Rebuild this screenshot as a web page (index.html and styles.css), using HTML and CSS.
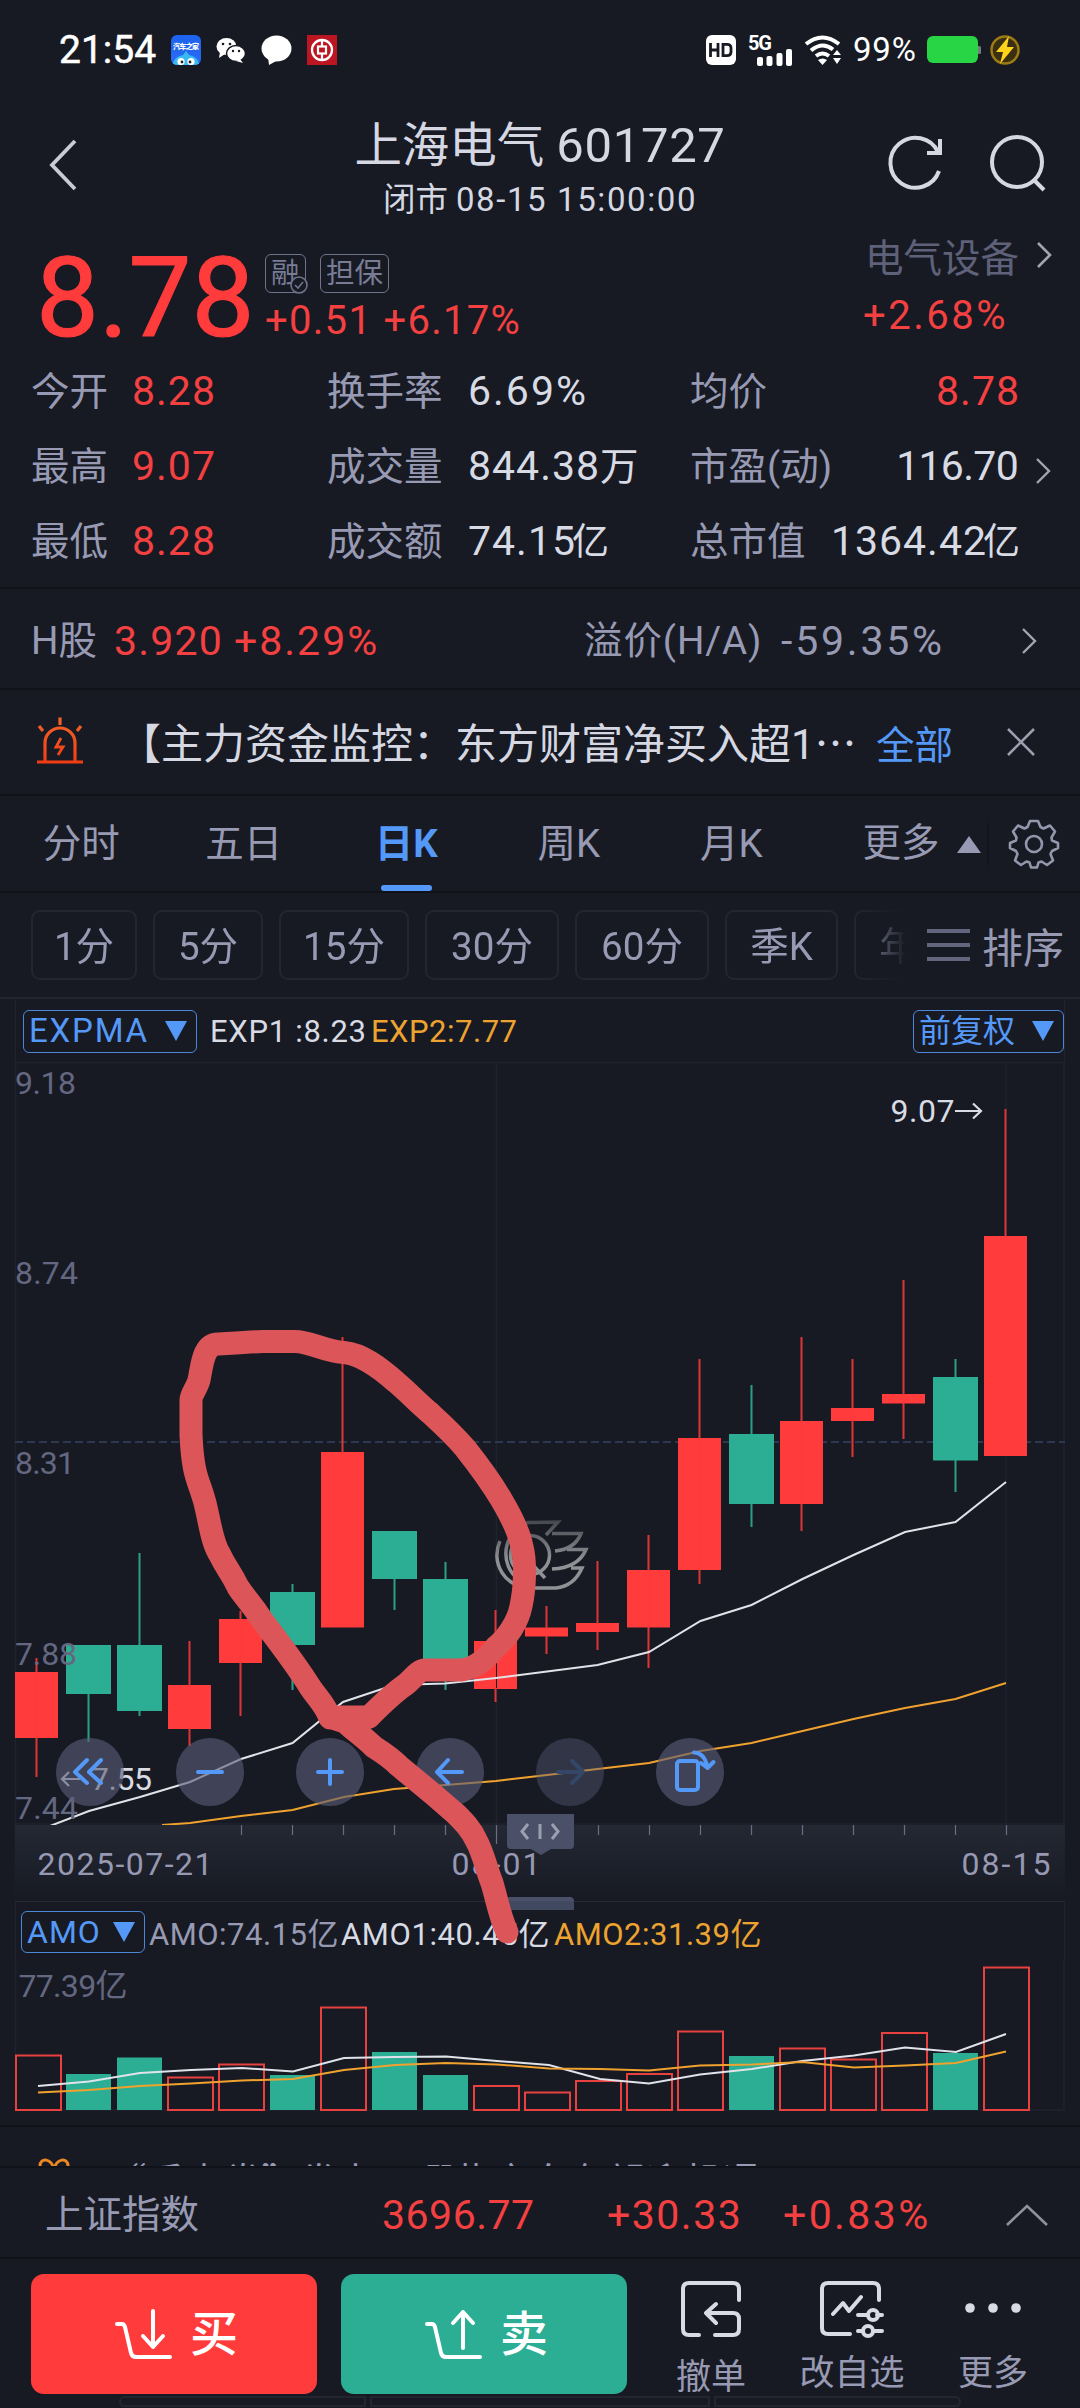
FILE: index.html
```html
<!DOCTYPE html>
<html lang="zh-CN">
<head>
<meta charset="utf-8">
<title>上海电气 601727</title>
<link rel="stylesheet" href="styles.css">
</head>
<body>
<div class="screen">

  <header class="status">
    <div class="status-left">
      <span class="clock">21:54</span>
      <svg width="30" height="30" viewBox="0 0 30 30">
        <defs>
          <linearGradient id="app" x1="0" y1="0" x2="0" y2="1"><stop offset="0" stop-color="#1d63ee"/><stop offset="1" stop-color="#2a6cf5"/></linearGradient>
          <clipPath id="appclip"><rect width="30" height="30" rx="6"/></clipPath>
        </defs>
        <rect width="30" height="30" rx="6" fill="url(#app)"/>
        <text x="2" y="14" font-size="7" font-weight="900" fill="#fff" textLength="26">汽车之家</text>
        <g clip-path="url(#appclip)">
          <path d="M2 30C2 23 8 21 12 20L15 16 18 20C23 21 28 24 28 30Z" fill="#38b9ef"/>
          <circle cx="10" cy="26.500" r="3.600" fill="#fff"/><circle cx="20" cy="26.500" r="3.600" fill="#fff"/>
          <circle cx="11" cy="27" r="1.400" fill="#222"/><circle cx="19" cy="27" r="1.400" fill="#222"/>
        </g>
      </svg>
      <svg width="30" height="30" viewBox="0 0 30 30">
        <ellipse cx="10.500" cy="11.500" rx="10" ry="8.500" fill="#fff"/><path d="M4 17L3 23 9 19Z" fill="#fff"/>
        <ellipse cx="20" cy="18.500" rx="9.500" ry="8" fill="#fff" stroke="#171a23" stroke-width="1.500"/><path d="M24 24L27 28 20 26Z" fill="#fff"/>
        <g fill="#171a23"><circle cx="7" cy="9" r="1.300"/><circle cx="14" cy="9" r="1.300"/><circle cx="17" cy="16" r="1.200"/><circle cx="23" cy="16" r="1.200"/></g>
      </svg>
      <svg width="31" height="30" viewBox="0 0 31 30"><ellipse cx="15.500" cy="13.500" rx="15" ry="13" fill="#fff"/><path d="M7 22L8 30 17 25Z" fill="#fff"/></svg>
      <svg width="30" height="30" viewBox="0 0 30 30">
        <rect width="30" height="30" fill="#bb1622"/>
        <circle cx="15" cy="15" r="10" fill="none" stroke="#fff" stroke-width="2.300"/>
        <rect x="11" y="11.500" width="8" height="7" fill="none" stroke="#fff" stroke-width="2.200"/>
        <path d="M15 5V11M15 19V25" stroke="#fff" stroke-width="2.200"/>
      </svg>
    </div>
    <div class="status-right">
      <svg class="i-hd" width="30" height="30" viewBox="0 0 30 30"><rect width="30" height="30" rx="6" fill="#fff"/><path d="M4.500 8V22M12 8V22M4.500 15H12M17 9.300V20.700H21Q25 20.700 25 17V13Q25 9.300 21 9.300Z" fill="none" stroke="#171a23" stroke-width="2.800"/></svg>
      <svg class="i-net" width="45" height="31" viewBox="0 0 45 31">
        <text x="0" y="14.500" font-size="20" font-weight="700" fill="#fff" textLength="24">5G</text>
        <g fill="#fff"><rect x="9" y="22" width="6" height="9" rx="2"/><rect x="18.500" y="21" width="6" height="10" rx="2"/><rect x="28.500" y="18" width="6" height="13" rx="2"/><rect x="38" y="14" width="6" height="17" rx="2"/></g>
      </svg>
      <svg class="i-wifi" width="38" height="30" viewBox="0 0 38 30">
        <g fill="none" stroke="#fff" stroke-width="4"><path d="M2 9Q18.500 -4 35 9"/><path d="M7 15.500Q18.500 6 29 14.500"/><path d="M12 21Q18.500 16 25 21"/></g>
        <path d="M14 25Q18.500 22 23 25L18.500 30Z" fill="#fff"/>
        <path d="M33 15L37 20H29ZM33 29L37 23H29Z" fill="#fff"/>
      </svg>
      <span class="pct">99%</span>
      <svg class="i-bat" width="54" height="28" viewBox="0 0 54 28"><rect x="50" y="10" width="4" height="8" rx="1.500" fill="#777a80"/><rect width="51" height="27" rx="6" fill="#28d645"/></svg>
      <svg class="i-charge" width="30" height="30" viewBox="0 0 30 30"><circle cx="15" cy="15" r="13.500" fill="#3a2f10" stroke="#9b7b13" stroke-width="2.500"/><path d="M19 1L6 17H13L10 29 24 12H17Z" fill="#ffd21c"/></svg>
    </div>
  </header>

  <nav class="title-bar">
    <svg class="back" width="30" height="54" viewBox="0 0 30 54"><path d="M26 3L3 27 26 51" fill="none" stroke="#c9ccd6" stroke-width="3.800"/></svg>
    <div class="heading">
      <h1>上海电气 <span class="code">601727</span></h1>
      <p>闭市 <span class="time">08-15 15:00:00</span></p>
    </div>
    <div class="tools">
      <svg width="58" height="58" viewBox="0 0 58 58" fill="none" stroke="#d5d8e0" stroke-width="4"><path d="M52 37A25 25 0 1 1 51 18"/><path d="M53 5V19H40"/></svg>
      <svg width="58" height="58" viewBox="0 0 58 58" fill="none" stroke="#d5d8e0" stroke-width="4"><circle cx="28" cy="28" r="25"/><path d="M44 45L55 56"/></svg>
    </div>
  </nav>

  <section class="quote">
    <div class="price">8.78</div>
    <div class="change">
      <div class="badges">
        <span class="badge rong">融<svg width="18" height="18" viewBox="0 0 18 18"><circle cx="9" cy="9" r="8" fill="#171a23" stroke="#70738c" stroke-width="1.600"/><path d="M5 9L8 12 13 6" fill="none" stroke="#70738c" stroke-width="1.600"/></svg></span>
        <span class="badge">担保</span>
      </div>
      <div class="delta">+0.51 +6.17%</div>
    </div>
    <div class="sector">
      <div class="sector-name">电气设备<svg width="16" height="28" viewBox="0 0 16 28"><path d="M2 2L14 14 2 26" fill="none" stroke="#a2a4b0" stroke-width="2.600"/></svg></div>
      <div class="sector-pct">+2.68%</div>
    </div>
  </section>

  <section class="stats">
    <div class="stat-grid">
      <span>今开</span><b class="up">8.28</b><span>换手率</span><b class="wide">6.69%</b><span>均价</span><b class="up end">8.78</b>
      <span>最高</span><b class="up">9.07</b><span>成交量</span><b>844.38<small class="wan">万</small></b><span>市盈(动)</span><b class="end tight">116.70</b>
      <span>最低</span><b class="up">8.28</b><span>成交额</span><b>74.15<small>亿</small></b><span>总市值</span><b class="end">1364.42<small>亿</small></b>
    </div>
    <svg width="16" height="28" viewBox="0 0 16 28"><path d="M2 2L14 14 2 26" fill="none" stroke="#a2a4b0" stroke-width="2.400"/></svg>
  </section>

  <section class="hshare">
    <span class="h-label">H股</span><span class="up h-price">3.920</span><span class="up h-pct">+8.29%</span>
    <span class="prem">溢价(H/A)</span><span class="prem-v">-59.35%</span>
    <svg width="16" height="28" viewBox="0 0 16 28"><path d="M2 2L14 14 2 26" fill="none" stroke="#a2a4b0" stroke-width="2.400"/></svg>
  </section>

  <section class="alert">
    <svg class="siren" width="48" height="48" viewBox="0 0 48 48" fill="none" stroke="url(#fire)" stroke-width="3.200">
      <defs><linearGradient id="fire" gradientUnits="userSpaceOnUse" x1="0" y1="0" x2="0" y2="48"><stop offset="0" stop-color="#f0662b"/><stop offset="1" stop-color="#f23a12"/></linearGradient></defs>
      <path d="M1 45H47M9 44V26A15 15 0 0 1 39 26V44"/><path d="M24 .500V8M3 9L7 14M45 9L41 14"/><path d="M25 21L20 30H27L22 38" stroke-width="2.800"/>
    </svg>
    <span class="alert-text">【主力资金监控：东方财富净买入超1<i>⋯</i></span>
    <span class="all">全部</span>
    <svg width="30" height="30" viewBox="0 0 30 30"><path d="M2 2L28 28M28 2L2 28" stroke="#9d9fae" stroke-width="2.600"/></svg>
  </section>

  <nav class="tabs">
    <span>分时</span><span>五日</span><span class="active">日K</span><span>周K</span><span>月K</span>
    <div class="more">更多<i></i></div>
    <svg width="52" height="52" viewBox="-26 -26 52 52" fill="none" stroke="#9496ab" stroke-width="2.600" stroke-linejoin="round">
      <path d="M-4 -23H4L6.500 -17 9.500 -15.500 16 -18.500 21 -12.500 17.500 -6.500 18 -3.500 24 -1V4L18 7 16.500 10 19 16.500 13 21 7.500 17.500 4.500 18.500 3 23.500H-3L-4.500 18.500 -7.500 17.500 -13 21 -19 16.500 -16.500 10 -18 7 -24 4V-1L-18 -3.500 -17.500 -6.500 -21 -12.500 -16 -18.500 -9.500 -15.500 -6.500 -17Z"/><circle r="8"/>
    </svg>
  </nav>

  <nav class="periods">
    <div class="chips">
      <span class="w1">1分</span><span class="w2">5分</span><span class="w3">15分</span><span class="w4">30分</span><span class="w4">60分</span><span class="w5">季K</span><span class="w5">年K</span>
    </div>
    <svg width="43" height="34" viewBox="0 0 43 34"><path d="M0 3H43M0 17H43M0 31H43" stroke="#62657d" stroke-width="4.200"/></svg>
    <span class="sort">排序</span>
  </nav>

  <section class="chart">
    <div class="legend">
      <span class="pick expma">EXPMA<i></i></span><span class="exp1">EXP1 :8.23</span><span class="gold">EXP2:7.77</span>
      <span class="pick adj">前复权<i></i></span>
    </div>

    <svg class="kline" width="1080" height="839" viewBox="0 1062 1080 839">
      <defs>
        <linearGradient id="axis" x1="0" y1="0" x2="0" y2="1"><stop offset="0" stop-color="#242833"/><stop offset="1" stop-color="#171a23"/></linearGradient>
        <linearGradient id="mark" gradientUnits="userSpaceOnUse" x1="0" y1="1520" x2="0" y2="1560"><stop offset="0" stop-color="#45474e"/><stop offset="1" stop-color="#909194"/></linearGradient>
        <clipPath id="plot"><rect x="15" y="1062" width="1050" height="763"/></clipPath>
      </defs>
      <g fill="none" stroke="#20232e" stroke-width="1.500">
        <path d="M15.500 1062V1901M1064 1062V1824M496.500 1062V1824M1006 1062V1824M15 1062.500H1065M15 1824H1065"/>
      </g>
      <path d="M15 1442H1065" stroke="#2b3850" stroke-width="2" stroke-dasharray="8 4"/>
      <g fill="none" stroke="url(#mark)" stroke-width="3.500">
        <path d="M519 1580A33 33 0 0 1 528 1522.500L558 1522 546 1535M500 1541A33 33 0 0 0 530 1588H556Q574 1586 582 1568H571M552 1533.500H581Q575 1549 555 1551M567 1549.500H586Q578 1568 552 1569"/>
        <circle cx="530" cy="1555" r="19.500"/><path d="M530 1562L545 1578"/>
      </g>
      <g fill="#ff3b3b">
        <path d="M15 1672h43v66h-43zM168 1685h43v44h-43zM219 1619h43v44h-43zM321 1452h43v175.500h-43zM474 1641h43v48h-43zM525 1627.500h43v9h-43zM576 1623h43v9h-43zM627 1570h43v57.500h-43zM678 1438h43v132h-43zM780 1421h43v83h-43zM831 1408h43v13h-43zM882 1394h43v9.500h-43zM984 1236h43v220h-43z"/>
        <path d="M35.500 1658h2v119h-2zM188.500 1641h2v105h-2zM239.500 1611h2v105h-2zM341.500 1337h2v116h-2zM494.500 1610h2v92h-2zM545.500 1606h2v48h-2zM596.500 1561h2v89h-2zM647.500 1535h2v133h-2zM698.500 1359h2v225h-2zM800.500 1337h2v194h-2zM851.500 1359h2v98h-2zM902.500 1280h2v159h-2zM1004.500 1109h2v128h-2z" opacity=".85"/>
      </g>
      <g fill="#2bae94">
        <path d="M66 1645h45v49h-45zM117 1645h45v66h-45zM270 1592h45v53h-45zM372 1531h45v48h-45zM423 1579h45v84h-45zM729 1434h45v70h-45zM933 1377h45v83.500h-45z"/>
        <path d="M87.500 1645h2v97h-2zM138.500 1553h2v163h-2zM291.500 1584h2v106h-2zM393.500 1531h2v79h-2zM444.500 1562h2v128h-2zM750.500 1385h2v142h-2zM954.500 1359h2v133h-2z" opacity=".9"/>
      </g>
      <path d="M496.500 1642V1688" stroke="#171a23" stroke-width="1"/>
      <g clip-path="url(#plot)" fill="none" stroke-width="2">
        <polyline stroke="#e0e3ea" points="50,1826 89,1811 140,1797 190,1782 241,1759 292.500,1743 343,1702 394,1685 445,1683.500 496,1678 547,1671.500 597.500,1665 649,1652 700.500,1621 751.500,1605 802.500,1579 853.500,1555 905,1532 955.500,1522 1006,1482"/>
        <polyline stroke="#f0a12e" points="162,1825 190,1823 241,1816 292.500,1810 344,1797 394,1789 445.500,1785 496,1781 547,1775 597.500,1769 649,1763 700.500,1751 751.500,1743 802.500,1731 853.500,1719 905,1708 955.500,1699 1006,1683"/>
      </g>
      <g font-size="32" fill="#646781">
        <text x="15" y="1094" textLength="61">9.18</text><text x="15" y="1283.500" textLength="63">8.74</text><text x="15" y="1474" textLength="60">8.31</text><text x="15" y="1665" textLength="62">7.88</text><text x="15" y="1819" textLength="63">7.44</text>
      </g>
      <g font-size="32" fill="#d9dce5"><text x="890.500" y="1122" textLength="64">9.07</text><text x="91" y="1790" textLength="61">7.55</text></g>
      <path d="M955 1111H981M973 1103.500L981 1111 973 1118.500M80 1779H62M69 1772L62 1779 69 1786" fill="none" stroke="#d9dce5" stroke-width="2.200"/>

      <rect x="15" y="1825" width="1050" height="76" fill="url(#axis)"/>
      <path d="M241.500 1825v10M292.500 1825v10M343.500 1825v10M394.500 1825v10M445.500 1825v10M496.500 1825v19M547.500 1825v10M598.500 1825v10M649.500 1825v10M700.500 1825v10M751.500 1825v10M802.500 1825v10M853.500 1825v10M904.500 1825v10M955.500 1825v10M1006.500 1825v10" stroke="#6a6d84" stroke-width="1.200"/>
      <g font-size="32" fill="#9799b3"><text x="37.500" y="1875" textLength="175">2025-07-21</text><text x="451.500" y="1875" textLength="89">08-01</text><text x="961.500" y="1875" textLength="89">08-15</text></g>

      <g fill="#5a5e78" fill-opacity=".62">
        <circle cx="90" cy="1772" r="34"/><circle cx="210" cy="1772" r="34"/><circle cx="330" cy="1772" r="34"/><circle cx="450" cy="1772" r="34"/><circle cx="570" cy="1772" r="34" fill-opacity=".4"/><circle cx="690" cy="1772" r="34"/>
      </g>
      <g fill="none" stroke="#5599f8" stroke-width="4" stroke-linecap="round" stroke-linejoin="round">
        <path d="M87 1760L75 1772 87 1783M101 1760L89 1772 101 1783"/>
        <path d="M198 1772H222M318 1772H342M330 1760V1784"/>
        <path d="M462 1772H437M448 1760L437 1772 448 1783"/>
        <path d="M558 1772H583M572 1761L583 1772 572 1783" stroke="#344767"/>
        <rect x="677" y="1761" width="21" height="29" rx="3"/><path d="M694 1752.500Q705 1753 707.500 1768M701 1763L707.500 1768 713.500 1762"/>
      </g>
      <path d="M507 1814H574V1845Q574 1849 570 1849H551L541 1855 531 1849H511Q507 1849 507 1845Z" fill="#4a5067"/>
      <path d="M528 1824L522 1831.500 528 1839M552 1824L558 1831.500 552 1839M540 1824V1839" fill="none" stroke="#9a9fb2" stroke-width="3"/>
      <path d="M507 1901V1899Q507 1897 510 1897H571Q574 1898 574 1901Z" fill="#4a5067"/>
    </svg>

    <div class="legend amo">
      <span class="pick">AMO<i></i></span><span class="a0">AMO:74.15亿</span><span class="a1">AMO1:40.45亿</span><span class="a2">AMO2:31.39亿</span>
    </div>

    <svg class="volume" width="1080" height="166" viewBox="0 1960 1080 166">
      <path d="M15.500 1960V2110H1064V1960" fill="none" stroke="#20232e" stroke-width="1.500"/>
      <text x="18.500" y="1996.500" font-size="32" fill="#646781" textLength="109">77.39亿</text>
      <path fill="#2bae94" d="M66 2074h45v36h-45zM117 2057.500h45v52.500h-45zM270 2075h45v35h-45zM372 2052h45v58h-45zM423 2075h45v35h-45zM729 2056h45v54h-45zM933 2053h45v57h-45z"/>
      <path fill="none" stroke="#e8413f" stroke-width="2" d="M16 2055.500h45v54.500h-45zM168 2077.500h45v32.500h-45zM219 2064.500h45v45.500h-45zM321 2007.500h45v102.500h-45zM474 2086h45v24h-45zM525 2092.500h45v17.500h-45zM576 2081h45v29h-45zM627 2074h45v36h-45zM678 2031.500h45v78.500h-45zM780 2048.500h45v61.500h-45zM831 2059.500h45v50.500h-45zM882 2033h45v77h-45zM984 1967.500h45v142.500h-45z"/>
      <g fill="none" stroke-width="2">
        <polyline stroke="#e0e3ea" points="38,2086 89,2081.500 140,2073 191,2070 242,2068 293,2071.500 344,2058 395,2057 446,2056.500 497,2061 549,2065 600,2079 649,2083.500 700,2074.500 752,2069 802,2061 854,2055.500 905,2047.500 956,2052 1006,2034"/>
        <polyline stroke="#f0a12e" points="38,2092.500 89,2090 140,2086 191,2083.500 242,2080.500 293,2079 344,2070 395,2065 446,2063 497,2064.500 549,2068.500 600,2069 649,2070.500 700,2065.500 752,2064.500 802,2062 854,2067.500 905,2065.500 956,2063 1006,2051.500"/>
      </g>
    </svg>

    <svg class="annotation" width="1080" height="1127" viewBox="0 999 1080 1127">
      <path d="M507 1901H574V1910H507Z" fill="#414961"/>
      <path fill="none" stroke="#dc5659" stroke-width="23" stroke-linecap="round" stroke-linejoin="round" d="M330 1718C325 1704 318 1699 310 1687C298 1667 275 1637 262 1620C250 1601 245 1598 238 1587C231 1572 226 1568 220 1555C212 1543 210 1523 205 1503C199 1480 193 1478 191 1435V1400C191 1394 197 1388 199 1380C202 1366 203 1343 219 1344C235 1343 250 1342 262 1341.500H294C310 1341 326 1352 344 1352.500C362 1354 380 1368 396 1382C408 1392 419 1404 430 1413C442 1424 453 1434 465 1448C480 1467 491 1482 501 1499C510 1514 519 1531 522 1547C526 1562 525 1588 521 1606C518 1622 507 1638 496 1647C488 1656 478 1668 461 1670H425C418 1670 412 1680 405 1685C392 1694 380 1706 369 1717H330L345 1722C357 1733 364 1737 374 1747C382 1752 390 1757 399 1766L434 1795L456 1814C464 1822 471 1829 476 1840C483 1852 487 1871 492 1883C497 1900 500 1917 507 1932"/>
    </svg>
  </section>

  <section class="news">
    <svg width="32" height="32" viewBox="0 0 32 32" fill="none" stroke="#ec8722" stroke-width="3"><path d="M16 12C14 0 2 -1 2 8V12H30V8C30 -1 18 0 16 12M4 12V30H28V12"/></svg>
    <span>“反内卷”发力！哪些方向有望迎机遇？</span>
  </section>

  <section class="index">
    <span class="index-name">上证指数</span><span class="up n1">3696.77</span><span class="up n2">+30.33</span><span class="up n3">+0.83%</span>
    <svg width="44" height="24" viewBox="0 0 44 24"><path d="M2 22L22 3 42 22" fill="none" stroke="#8f919f" stroke-width="2.600"/></svg>
  </section>

  <footer class="actions">
    <button class="buy"><svg width="58" height="52" viewBox="0 0 58 52" fill="none" stroke="#fff" stroke-width="4" stroke-linecap="round" stroke-linejoin="round"><path d="M2 15H7Q9 15 10 18L16 44Q17 48 21 48H55M38 2V38M28 27L38 38 48 27"/></svg>买</button>
    <button class="sell"><svg width="58" height="52" viewBox="0 0 58 52" fill="none" stroke="#fff" stroke-width="4" stroke-linecap="round" stroke-linejoin="round"><path d="M2 15H7Q9 15 10 18L16 44Q17 48 21 48H55M38 39V3M28 14L38 3 48 14"/></svg>卖</button>
    <div class="act cancel"><svg width="60" height="58" viewBox="0 0 60 58" fill="none" stroke="#d8dae4" stroke-width="4" stroke-linecap="round" stroke-linejoin="round"><path d="M58 20V9Q58 3 52 3H8Q2 3 2 9V49Q2 55 8 55H18M34 55H52Q58 55 58 49V39Q58 33 52 33H26M35 24L25 33 35 43"/></svg><span>撤单</span></div>
    <div class="act edit"><svg width="66" height="58" viewBox="0 0 66 58" fill="none" stroke="#d8dae4" stroke-width="4" stroke-linecap="round" stroke-linejoin="round"><path d="M60 20V9Q60 3 54 3H9Q3 3 3 9V48Q3 54 9 54H31M14 34L24 23 30 31 42 17M39 35H49M58 35H63M54 51H63M39 51H44"/><circle cx="54" cy="35" r="5"/><circle cx="49" cy="51" r="5"/></svg><span>改自选</span></div>
    <div class="act"><svg width="60" height="58" viewBox="0 0 60 58" fill="#d8dae4"><circle cx="7" cy="28" r="4.800"/><circle cx="30" cy="28" r="4.800"/><circle cx="53" cy="28" r="4.800"/></svg><span>更多</span></div>
  </footer>
  <div class="nav-hint"><i></i><i></i><i></i></div>
</div>
</body>
</html>
```

FILE: styles.css
```css
* { box-sizing: border-box; margin: 0; padding: 0; }
body {
  width: 1080px;
  height: 2408px;
  overflow: hidden;
  background: #171a23;
  color: #d5d8e2;
  font-family: Roboto, "Noto Sans CJK SC", sans-serif;
}
svg { display: block; flex: none; overflow: visible; }
i { font-style: normal; }
span, b { white-space: nowrap; }
.screen { width: 1080px; height: 2408px; overflow: hidden; }
.up, .delta, .sector-pct { color: #f44040; }

.status { height: 100px; padding: 0 60px 0 59px; display: flex; justify-content: space-between; align-items: center; }
.status-left, .status-right { display: flex; align-items: center; }
.status-left { gap: 15px; }
.clock { width: 97px; font-size: 39px; line-height: 100px; color: #fff; -webkit-text-stroke: .5px #fff; }
.i-net { margin-left: 12px; }
.i-wifi { margin-left: 11px; }
.pct { width: 64px; margin-left: 11px; font-size: 33px; color: #fff; line-height: 104px; letter-spacing: .8px; }
.i-bat { margin-left: 10px; }
.i-charge { margin-left: 9px; }

.title-bar { height: 132px; padding: 0 33px 0 49px; display: flex; }
.back { margin-top: 38px; }
.heading { width: 500px; margin-left: 211px; padding-top: 16px; text-align: center; }
.heading h1 { font-size: 47.5px; font-weight: 400; line-height: 60px; }
.code { font-size: 49px; letter-spacing: .7px; }
.heading p { font-size: 32.5px; line-height: 48px; }
.time { font-size: 33px; letter-spacing: 1.6px; }
.tools { display: flex; gap: 44px; padding-top: 34px; margin-left: auto; }

.quote { height: 121px; padding: 2px 28px 0 36px; display: flex; }
.price { width: 229px; font-size: 112px; line-height: 128px; color: #ff3b3b; -webkit-text-stroke: 1.2px #ff3b3b; }
.change { flex: 1; padding-top: 20px; }
.badges { display: flex; gap: 14px; }
.badge { height: 39px; padding: 0 5px; display: flex; align-items: center; font-size: 28.5px; line-height: 36px; color: #797c95; border: 1.5px solid #70738c; border-radius: 6px; }
.rong { width: 41px; }
.rong svg { margin: 22px 0 0 -10px; }
.delta { font-size: 40px; line-height: 56px; letter-spacing: 1.3px; }
.sector { width: 187px; }
.sector-name { display: flex; align-items: center; justify-content: space-between; font-size: 38.5px; line-height: 50px; color: #5e6179; }
.sector-name svg { margin-bottom: 8px; }
.sector-pct { margin-left: -2px; font-size: 40px; line-height: 60px; padding-top: 2px; letter-spacing: 2.5px; }

.stats { height: 236px; padding: 1px 29px 0 31px; display: flex; align-items: center; justify-content: space-between; border-bottom: 2px solid #10121a; }
.stat-grid { width: 989px; height: 234px; display: grid; grid-template-columns: 101px 195px 141px 222px 120px 210px; grid-auto-rows: 75px; font-size: 38.5px; line-height: 75px; color: #989ab4; }
.stat-grid b { font-size: 41px; font-weight: 400; color: #d8dbe4; letter-spacing: 1px; }
.stat-grid b.up { color: #f44040; }
.stat-grid .end { text-align: right; }
.stat-grid .wide { letter-spacing: 2px; }
.stat-grid .tight { letter-spacing: -.7px; padding-right: 2px; }
.stat-grid small { font-size: 37px; letter-spacing: 0; margin-left: -4px; line-height: 1; }
.stat-grid .wan { font-size: 38.5px; margin-left: 0; }

.hshare { height: 101px; padding: 5px 43px 0 31px; display: flex; align-items: center; font-size: 41px; line-height: 90px; letter-spacing: 1.2px; color: #989ab4; border-bottom: 2px solid #10121a; }
.h-label, .prem { font-size: 38.5px; }
.h-label { width: 83px; letter-spacing: 0; }
.h-price { width: 120px; }
.h-pct { width: 350px; letter-spacing: 2px; }
.prem { width: 197px; letter-spacing: .9px; }
.prem-v { flex: 1; letter-spacing: 2.8px; }

.alert { height: 106px; padding: 0 44px 0 36px; display: flex; align-items: center; border-bottom: 2px solid #10121a; }
.siren { margin-bottom: 2px; }
.alert-text { width: 792px; padding: 6px 0 0 35px; font-size: 42px; line-height: 100px; }
.alert-text i { display: inline-block; width: 36px; }
.all { flex: 1; font-size: 38.5px; color: #5599f8; }

.tabs { height: 97px; display: flex; align-items: center; border-bottom: 2px solid #10121a; color: #989ab4; font-size: 38.5px; }
.tabs > span { width: 162.5px; height: 95px; line-height: 96px; text-align: center; display: flex; flex-direction: column; align-items: center; }
.tabs .active { color: #5599f8; font-weight: 700; }
.tabs .active::after { content: ""; width: 51px; height: 6px; margin-top: -7px; border-radius: 3px; background: #5599f8; }
.more { width: 176px; height: 42px; margin-right: 19px; padding-left: 50px; display: flex; align-items: center; gap: 17px; line-height: 38px; padding-bottom: 2px; border-right: 2px solid #12141c; }
.more i { margin-top: 3px; border: 12px solid transparent; border-top: 0; border-bottom: 17px solid #989ab4; }

.periods { height: 106px; padding: 0 0 1px 31px; display: flex; align-items: center; font-size: 38.5px; color: #989ab4; border-bottom: 2px solid #22252f; }
.chips { width: 875px; overflow: hidden; display: flex; gap: 16px; -webkit-mask-image: linear-gradient(90deg, #000 94%, transparent 100%); mask-image: linear-gradient(90deg, #000 94%, transparent 100%); }
.chips span { flex: none; height: 70px; line-height: 70px; text-align: center; border: 2px solid #232631; border-radius: 9px; }
.w1 { width: 106px; }
.w2 { width: 110px; }
.w3 { width: 130px; }
.w4 { width: 134px; }
.w5 { width: 113px; }
.periods svg { margin-left: 21px; }
.sort { margin-left: 12px; font-size: 41px; }

.chart { position: relative; height: 1128px; border-bottom: 2px solid #10121a; }
.legend { height: 63px; margin: 0 15px; padding: 1px 0 0 7px; display: flex; align-items: center; font-size: 31px; border-left: 1px solid #20232e; border-right: 1px solid #20232e; color: #d8dbe4; }
.pick { height: 43px; padding: 0 9px 0 5px; display: flex; align-items: center; justify-content: space-between; width: 174px; font-size: 33px; line-height: 40px; color: #5599f8; border: 1.5px solid #4c86d8; border-radius: 6px; }
.pick i { border: 11px solid transparent; border-bottom: 0; border-top: 20px solid #5599f8; }
.expma { letter-spacing: 1.8px; }
.exp1 { width: 161px; margin-left: 13px; letter-spacing: .7px; }
.gold { flex: 1; letter-spacing: .5px; color: #eda32f; }
.adj { width: 151px; font-size: 32px; }
.amo { height: 59px; padding-left: 5px; border-top: 1px solid #282b36; }
.amo .pick { width: 124px; font-size: 32px; height: 42px; letter-spacing: 1px; }
.a0 { width: 192px; margin-left: 4px; color: #989ab4; letter-spacing: .5px; }
.a1 { width: 213px; letter-spacing: .6px; }
.a2 { color: #eda32f; letter-spacing: .5px; }
.annotation { position: absolute; left: 0; top: 0; }

.news { height: 41px; padding: 31px 0 0 38px; overflow: hidden; display: flex; align-items: flex-start; border-bottom: 2px solid #10121a; color: #989ab4; font-size: 38.4px; }
.news span { padding-left: 38px; line-height: 42px; font-family: "Noto Sans CJK SC", sans-serif; }

.index { height: 91px; padding: 4px 31px 0 45px; display: flex; align-items: center; font-size: 41px; line-height: 86px; border-bottom: 2px solid #10121a; }
.index-name { width: 337px; font-size: 38.5px; color: #989ab4; }
.n1 { width: 225px; letter-spacing: .5px; }
.n2 { width: 176px; letter-spacing: 1.5px; }
.n3 { flex: 1; letter-spacing: 2.4px; }

.actions { height: 136px; padding: 15px 0 0 31px; display: flex; align-items: flex-start; }
.buy, .sell { flex: none; width: 286px; height: 120px; padding: 2px 0 0 5px; display: flex; align-items: center; justify-content: center; gap: 17px; border: 0; border-radius: 13px; color: #fff; font: 500 48px/60px Roboto, "Noto Sans CJK SC", sans-serif; }
.buy { background: #ff3b3b; }
.sell { margin-left: 24px; background: #2bae94; }
.act { flex: none; width: 140px; padding-top: 6px; display: flex; flex-direction: column; align-items: center; font-size: 35px; line-height: 44px; color: #989ab4; }
.act span { margin-top: 14px; }
.cancel { margin-left: 14px; }
.cancel span { margin-top: 18px; }
.edit { width: 142px; }

.nav-hint { width: 843px; margin: 1px auto 0 119px; display: flex; gap: 4px; }
.nav-hint i { height: 11px; width: 247px; border: 2px solid #232630; border-radius: 6px 0 0 6px; }
.nav-hint i:nth-child(2) { width: 340px; border-radius: 0; }
.nav-hint i:nth-child(3) { border-radius: 0 6px 6px 0; }
```
